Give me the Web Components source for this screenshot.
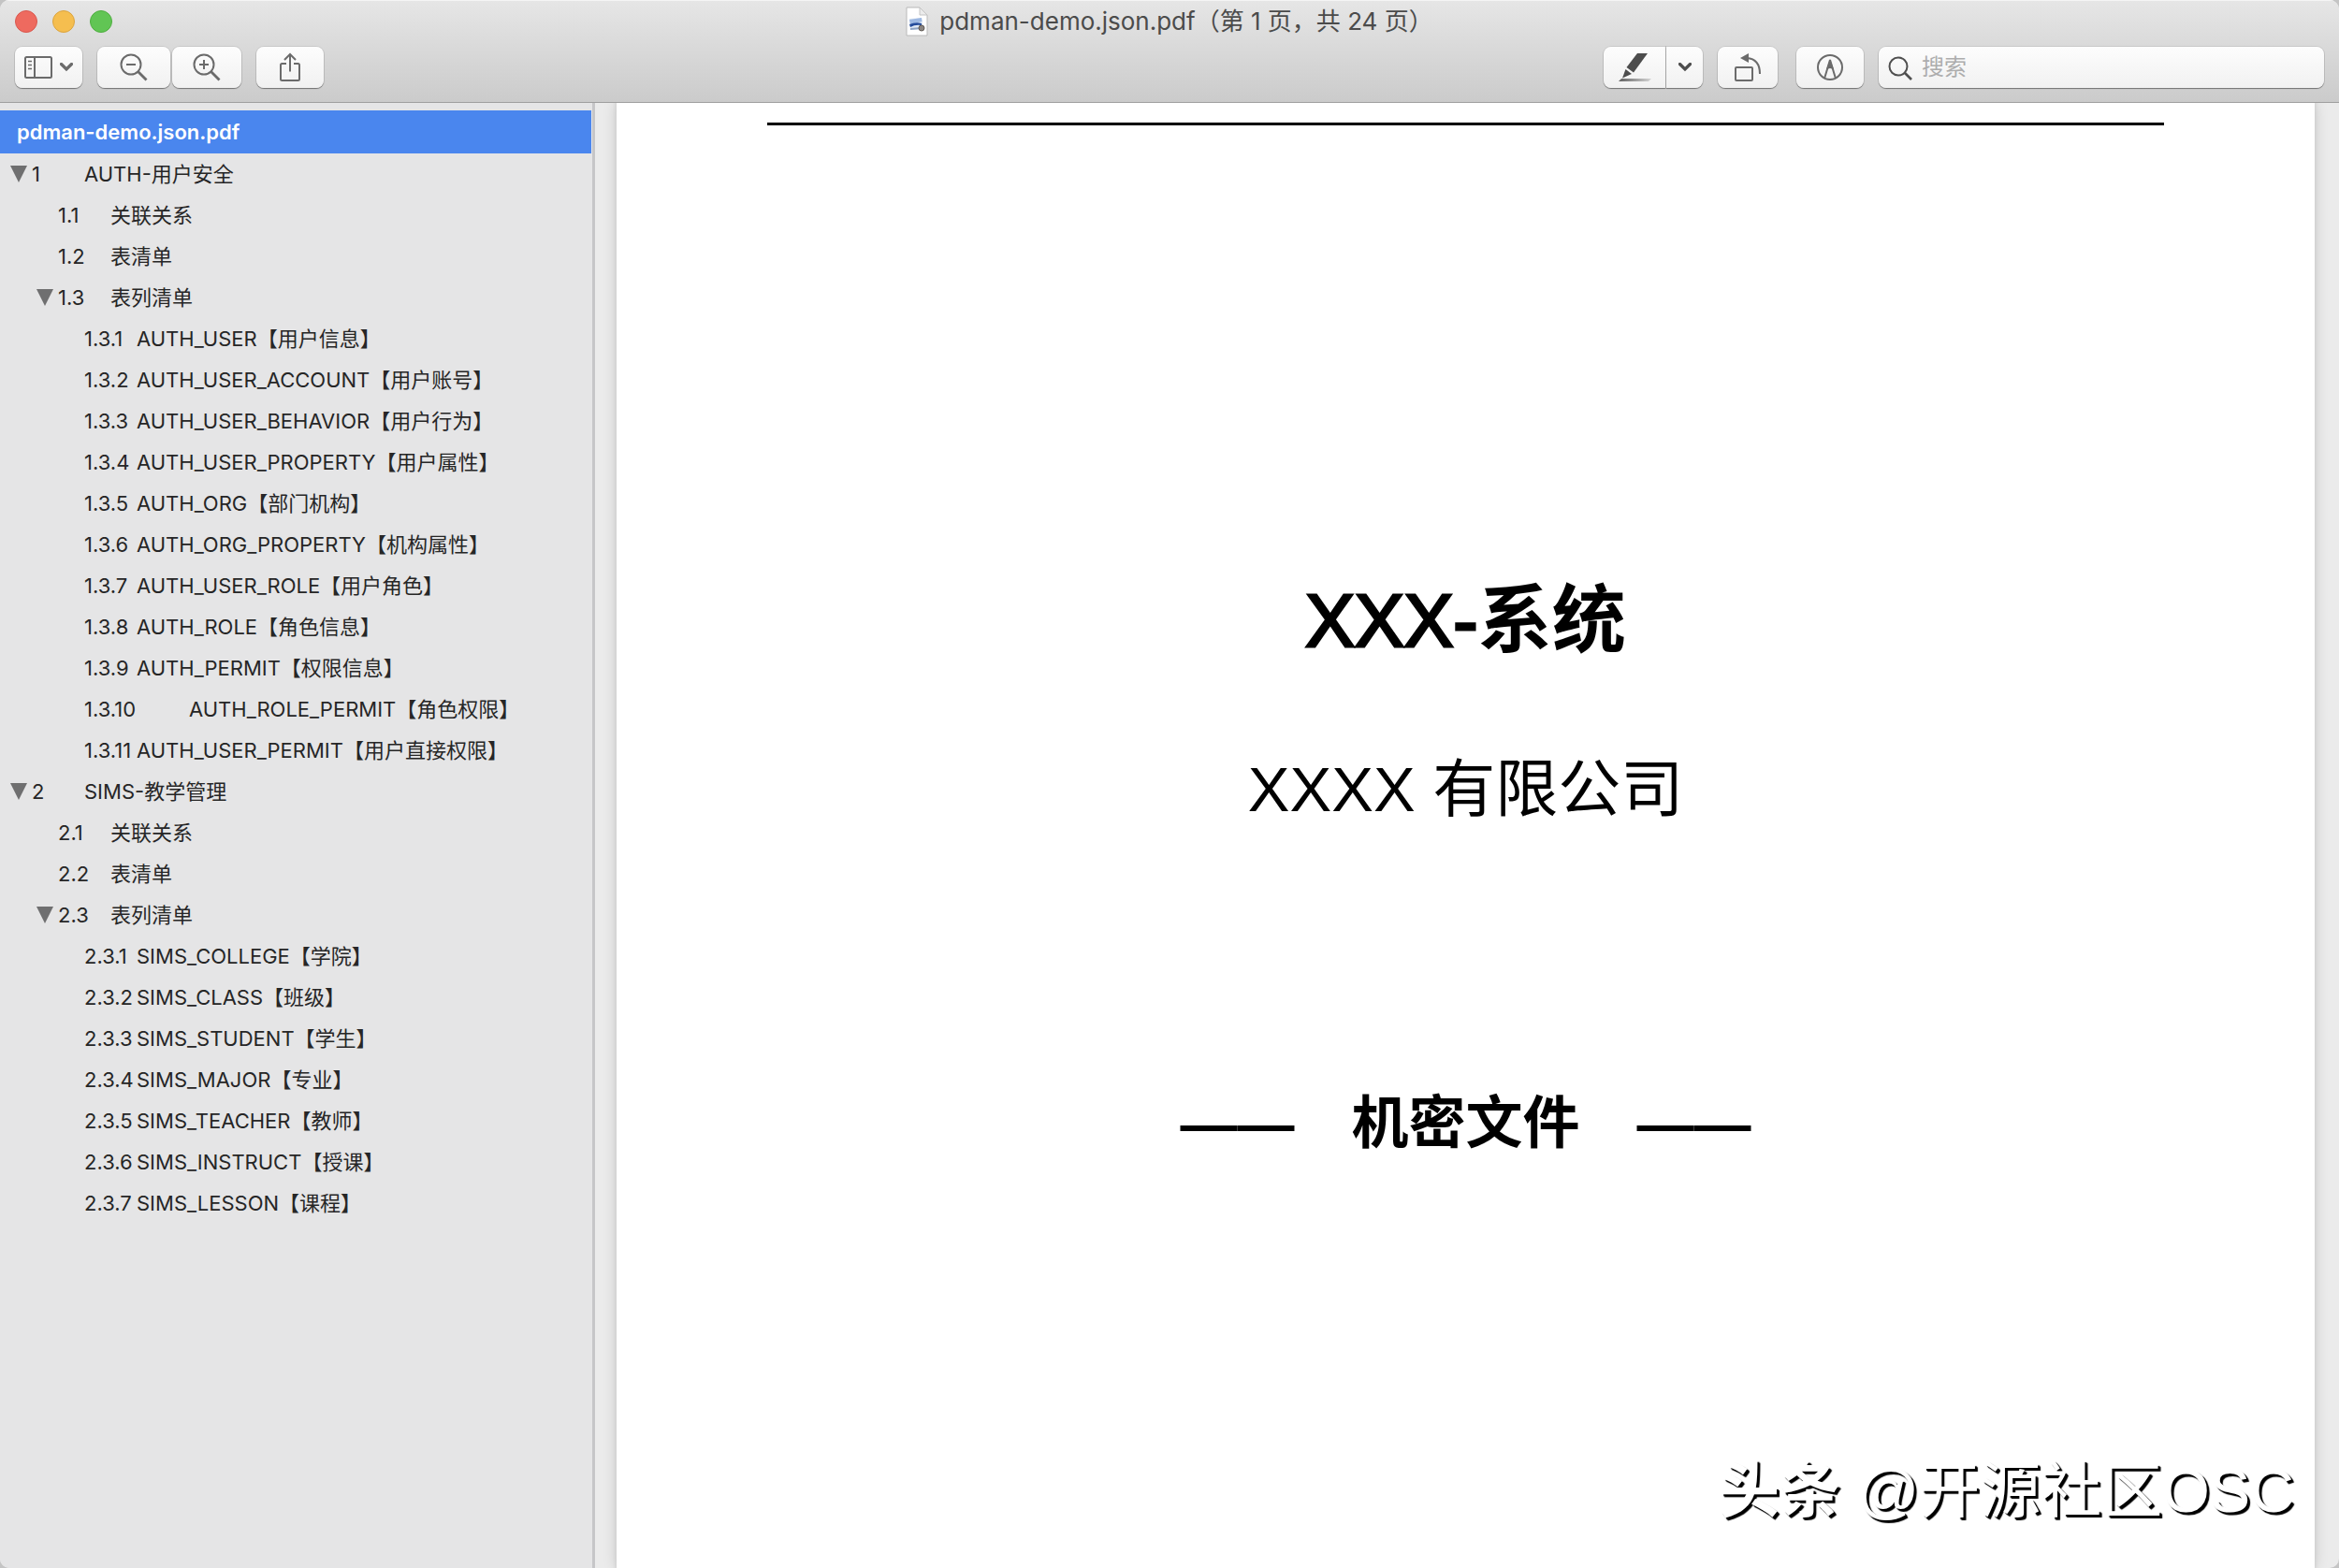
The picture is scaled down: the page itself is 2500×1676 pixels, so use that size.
<!DOCTYPE html>
<html lang="zh-CN">
<head>
<meta charset="utf-8">
<title>pdman-demo.json.pdf</title>
<style>
  html, body { margin: 0; height: 100%; }
  body { background: #c4c4c4; font-family: Inter, "Noto Sans CJK SC", sans-serif; }
</style>
</head>
<body>
<pdf-window></pdf-window>

<script>
const define = (name, html, setup) => {
  const template = document.createElement('template');
  template.innerHTML = html;
  customElements.define(name, class extends HTMLElement {
    constructor() {
      super();
      this.attachShadow({ mode: 'open' }).append(template.content.cloneNode(true));
    }
    connectedCallback() { if (setup) setup(this, this.shadowRoot); }
  });
};

/* A toolbar push button; data-label names it for assistive technology */
define('tool-button', `
<style>
  :host { display: block; flex: none; }
  button {
    box-sizing: border-box; width: 100%; height: 44px; padding: 0; border: 0; border-radius: var(--radius, 8px);
    display: flex; align-items: center; justify-content: center; gap: 8px;
    background: linear-gradient(#fdfdfd, #f1f1f1);
    box-shadow: 0 0 0 1px rgba(0,0,0,.08), 0 1px 1px rgba(0,0,0,.4);
  }
</style>
<button type="button"><slot></slot></button>`,
(host, root) => root.querySelector('button').setAttribute('aria-label', host.dataset.label));

define('traffic-lights', `
<style>
  :host { display: flex; gap: 16px; }
  button { width: 24px; height: 24px; padding: 0; border-radius: 50%; border: 1px solid #d9574e; background: #ee6a5f; }
  .min { border-color: #dba43f; background: #f5be4f; }
  .max { border-color: #4fae40; background: #61c554; }
</style>
<button type="button" aria-label="关闭"></button>
<button type="button" class="min" aria-label="最小化"></button>
<button type="button" class="max" aria-label="缩放"></button>`);

define('title-bar', `
<style>
  :host { display: grid; grid-template-columns: 1fr auto 1fr; align-items: center; height: 44px; padding: 0 16px; }
  h1 { margin: 0; display: flex; align-items: center; gap: 12px; font-size: 26px; font-weight: 400; line-height: 44px; color: #4b4b4b; white-space: nowrap; }
  svg { display: block; }
  span { line-height: 46px; }
</style>
<traffic-lights></traffic-lights>
<h1>
  <svg width="24" height="32" viewBox="0 0 24 32">
    <path d="M1 1h14l8 8v22H1z" fill="#fff" stroke="#b9b9b9"/>
    <path d="M15 1v8h8z" fill="#ececec" stroke="#c4c4c4"/>
    <path d="M4 13l13-1 2 12-14 1z" fill="#dfe8f4"/>
    <path d="M4 14l13-2 .5 4L5 19z" fill="#9db8e2"/>
    <path d="M4 19q7-3 13-1v2q-7-1-12 2z" fill="#244b9b"/>
    <path d="M5 23l12-1v2l-12 1z" fill="#8fa4c4"/>
    <circle cx="17" cy="23" r="3" fill="#8a8480" stroke="#615a55"/>
  </svg>
  <span>pdman-demo.json.pdf（第 1 页，共 24 页）</span>
</h1>`);

define('search-field', `
<style>
  :host { display: block; flex: 0 1 476px; }
  label {
    box-sizing: border-box; height: 44px; display: flex; align-items: center; gap: 8px; padding: 0 10px;
    border-radius: 8px; background: linear-gradient(#fdfdfd, #f1f1f1);
    box-shadow: 0 0 0 1px rgba(0,0,0,.08), 0 1px 1px rgba(0,0,0,.4);
  }
  svg { flex: none; }
  input { flex: 1; min-width: 0; border: 0; padding: 0; outline: 0; background: none; font: 24px/44px Inter, "Noto Sans CJK SC", sans-serif; color: #333; }
  input::placeholder { color: #adadad; opacity: 1; }
</style>
<label>
  <svg width="28" height="28" viewBox="0 0 28 28" fill="none" stroke="#4f4f4f" stroke-width="2"><circle cx="11" cy="13" r="9.5"/><path d="M18 20l7 7" stroke-width="2.6"/></svg>
  <input type="search" placeholder="搜索" aria-label="搜索">
</label>`);

define('tool-bar', `
<style>
  :host { display: flex; justify-content: space-between; padding: 6px 16px 15px; }
  .side, .pair { display: flex; gap: 16px; }
  .right { flex: 1; justify-content: flex-end; }
  .zoom { gap: 2px; }
  .split { gap: 1px; }
  .w64 { width: 64px; margin-right: 4px; } .w66 { width: 66px; } .w39 { width: 39px; }
  .w72 { width: 72px; } .w74 { width: 74px; } .w78 { width: 78px; }
  .head { --radius: 8px 0 0 8px; } .tail { --radius: 0 8px 8px 0; }
  svg { display: block; fill: none; stroke: #6b6b6b; stroke-width: 2; }
</style>
<div class="side">
  <tool-button class="w72" data-label="边栏">
    <svg width="30" height="24" viewBox="0 0 30 24"><rect x="1" y="1" width="28" height="22" rx="1.5"/><path d="M11 1v22"/><path d="M4 5.5h4M4 9.5h4M4 13.5h4" stroke-width="1.5"/></svg>
    <svg width="14" height="10" viewBox="0 0 14 10" stroke-width="3"><path d="M1.500 1.500L7 7l5.500-5.500" style="stroke-width:3.200" stroke-linecap="round"/></svg>
  </tool-button>
  <div class="pair zoom">
    <tool-button class="w78" data-label="缩小">
      <svg width="30" height="30" viewBox="0 0 30 30"><circle cx="12" cy="12" r="10.500"/><path d="M7 12h10"/><path d="M19.500 19.500l9 9" style="stroke-width:2.800"/></svg>
    </tool-button>
    <tool-button class="w74" data-label="放大">
      <svg width="30" height="30" viewBox="0 0 30 30"><circle cx="12" cy="12" r="10.500"/><path d="M7 12h10M12 7v10"/><path d="M19.500 19.500l9 9" style="stroke-width:2.800"/></svg>
    </tool-button>
  </div>
  <tool-button class="w72" data-label="共享">
    <svg width="24" height="32" viewBox="0 0 24 32"><path d="M8 12H3.500Q2 12 2 13.500v15Q2 30 3.500 30h17q1.500 0 1.500-1.500v-15Q22 12 20.500 12H16M12 20.500V2M6 8l6-6 6 6"/></svg>
  </tool-button>
</div>
<div class="side right">
  <div class="pair split">
    <tool-button class="w66 head" data-label="高亮标记">
      <svg width="36" height="32" viewBox="0 0 36 32" style="stroke:none">
        <defs><linearGradient id="ink" x1="0" x2="1"><stop offset="0" stop-color="#5f5f5f"/><stop offset="1" stop-color="#d6d6d6"/></linearGradient></defs>
        <path d="M21 1h11L17 21.500l-7.500-5.500z" fill="#4d4d4d"/><path d="M8.500 18l6.500 5-10 4.500z" fill="#4d4d4d"/><path d="M4 28h32l-3 3H1z" fill="url(#ink)"/>
      </svg>
    </tool-button>
    <tool-button class="w39 tail" data-label="标记颜色">
      <svg width="14" height="10" viewBox="0 0 14 10"><path d="M1.500 1.500L7 7l5.500-5.500" style="stroke:#4d4d4d;stroke-width:3.200" stroke-linecap="round"/></svg>
    </tool-button>
  </div>
  <tool-button class="w64" data-label="旋转">
    <svg width="30" height="32" viewBox="0 0 30 32"><rect x="2" y="16" width="18" height="14" rx="1"/><path d="M14 6q14 1 14 17"/><path d="M7 6l9-5v10z" style="fill:#6b6b6b;stroke:none"/></svg>
  </tool-button>
  <tool-button class="w72" data-label="标记">
    <svg width="30" height="30" viewBox="0 0 30 30"><circle cx="15" cy="15" r="13"/><path d="M15 7L9 27M15 7l6 20"/><path d="M15 6l4 11-4-1-4 1z" style="fill:#6b6b6b;stroke:none"/></svg>
  </tool-button>
  <search-field></search-field>
</div>`);

/* One outline row: the code's depth sets the indent */
define('outline-item', `
<style>
  :host { display: flex; align-items: center; height: 44px; padding-left: calc(6px + 28px * (var(--level) - 1)); font-size: 22px; line-height: 44px; color: #262626; white-space: nowrap; }
  button { flex: none; width: 28px; height: 44px; padding: 0 0 0 5px; border: 0; background: none; visibility: hidden; }
  :host([open]) button { visibility: visible; }
  svg { display: block; }
  .code { flex: none; width: 56px; }
  :host([wide]) .code { width: 112px; }
</style>
<button type="button" aria-label="折叠"><svg width="18" height="18" viewBox="0 0 18 18"><path d="M0 0h18L9 18z" fill="#6f6f70"/></svg></button>
<span class="code"></span><span><slot></slot></span>`,
(host, root) => {
  const code = host.getAttribute('code');
  host.style.setProperty('--level', code.split('.').length);
  host.setAttribute('role', 'treeitem');
  root.querySelector('.code').textContent = code;
});

define('outline-sidebar', `
<style>
  :host { display: block; flex: none; box-sizing: border-box; width: 636px; padding-top: 8px; background: #e5e5e6; border-right: 3px solid #c6c6c8; overflow: hidden; }
  .doc { height: 46px; padding-left: 18px; margin-right: 1px; background: #4a86ee; color: #fff; font-size: 22px; font-weight: 600; line-height: 46px; }
</style>
<div class="doc">pdman-demo.json.pdf</div>
<div role="tree">
  <outline-item code="1" open>AUTH-用户安全</outline-item>
  <outline-item code="1.1">关联关系</outline-item>
  <outline-item code="1.2">表清单</outline-item>
  <outline-item code="1.3" open>表列清单</outline-item>
  <outline-item code="1.3.1">AUTH_USER【用户信息】</outline-item>
  <outline-item code="1.3.2">AUTH_USER_ACCOUNT【用户账号】</outline-item>
  <outline-item code="1.3.3">AUTH_USER_BEHAVIOR【用户行为】</outline-item>
  <outline-item code="1.3.4">AUTH_USER_PROPERTY【用户属性】</outline-item>
  <outline-item code="1.3.5">AUTH_ORG【部门机构】</outline-item>
  <outline-item code="1.3.6">AUTH_ORG_PROPERTY【机构属性】</outline-item>
  <outline-item code="1.3.7">AUTH_USER_ROLE【用户角色】</outline-item>
  <outline-item code="1.3.8">AUTH_ROLE【角色信息】</outline-item>
  <outline-item code="1.3.9">AUTH_PERMIT【权限信息】</outline-item>
  <outline-item code="1.3.10" wide>AUTH_ROLE_PERMIT【角色权限】</outline-item>
  <outline-item code="1.3.11">AUTH_USER_PERMIT【用户直接权限】</outline-item>
  <outline-item code="2" open>SIMS-教学管理</outline-item>
  <outline-item code="2.1">关联关系</outline-item>
  <outline-item code="2.2">表清单</outline-item>
  <outline-item code="2.3" open>表列清单</outline-item>
  <outline-item code="2.3.1">SIMS_COLLEGE【学院】</outline-item>
  <outline-item code="2.3.2">SIMS_CLASS【班级】</outline-item>
  <outline-item code="2.3.3">SIMS_STUDENT【学生】</outline-item>
  <outline-item code="2.3.4">SIMS_MAJOR【专业】</outline-item>
  <outline-item code="2.3.5">SIMS_TEACHER【教师】</outline-item>
  <outline-item code="2.3.6">SIMS_INSTRUCT【授课】</outline-item>
  <outline-item code="2.3.7">SIMS_LESSON【课程】</outline-item>
</div>`);

define('pdf-page', `
<style>
  :host { display: block; flex: 1; min-width: 0; padding: 21px 161px 0; background: #fff; box-shadow: 0 0 3px 1px #cfcfcf, 0 0 14px rgba(0,0,0,.16); text-align: center; color: #000; font-family: "Liberation Sans", "Noto Sans CJK SC", sans-serif; }
  hr { margin: 0 0 470px; border: 0; height: 3px; background: #000; }
  h2 { margin: 0 0 70px; font-size: 79px; line-height: 120px; font-weight: 700; }
  h2 span { font-weight: 400; -webkit-text-stroke: 3px #000; }
  p { margin: 0; font-size: 67px; line-height: 100px; }
  .secret { margin-top: 257px; font-size: 61px; font-weight: 700; white-space: pre; }
</style>
<hr>
<h2><span>XXX-</span>系统</h2>
<p>XXXX 有限公司</p>
<p class="secret">——　机密文件　——</p>`);

define('water-mark', `
<style>
  :host { position: absolute; right: 48px; bottom: 34px; font: 65px/96px "Liberation Sans", "Noto Sans CJK SC", sans-serif; color: #fff; text-shadow: 3px 3px 1px #000, 2px 2px 1px #000; white-space: nowrap; }
  b { font-weight: 700; }
</style>
<b>头条</b> @开源社区OSC`);

define('pdf-window', `
<style>
  :host { position: relative; display: flex; flex-direction: column; height: 100vh; min-height: 1400px; border-radius: 10px; overflow: hidden; background: #ebebeb; }
  header { flex: none; background: linear-gradient(#e6e6e6, #cbcbcb); border-bottom: 1px solid #9f9f9f; box-shadow: inset 0 1px #f5f5f5; }
  main { flex: 1; min-height: 0; display: flex; }
  .canvas { flex: 1; min-width: 0; display: flex; padding: 0 26px 0 23px; overflow: hidden; }
</style>
<header><title-bar></title-bar><tool-bar></tool-bar></header>
<main>
  <outline-sidebar></outline-sidebar>
  <div class="canvas"><pdf-page></pdf-page></div>
</main>
<water-mark></water-mark>`);
</script>
</body>
</html>
